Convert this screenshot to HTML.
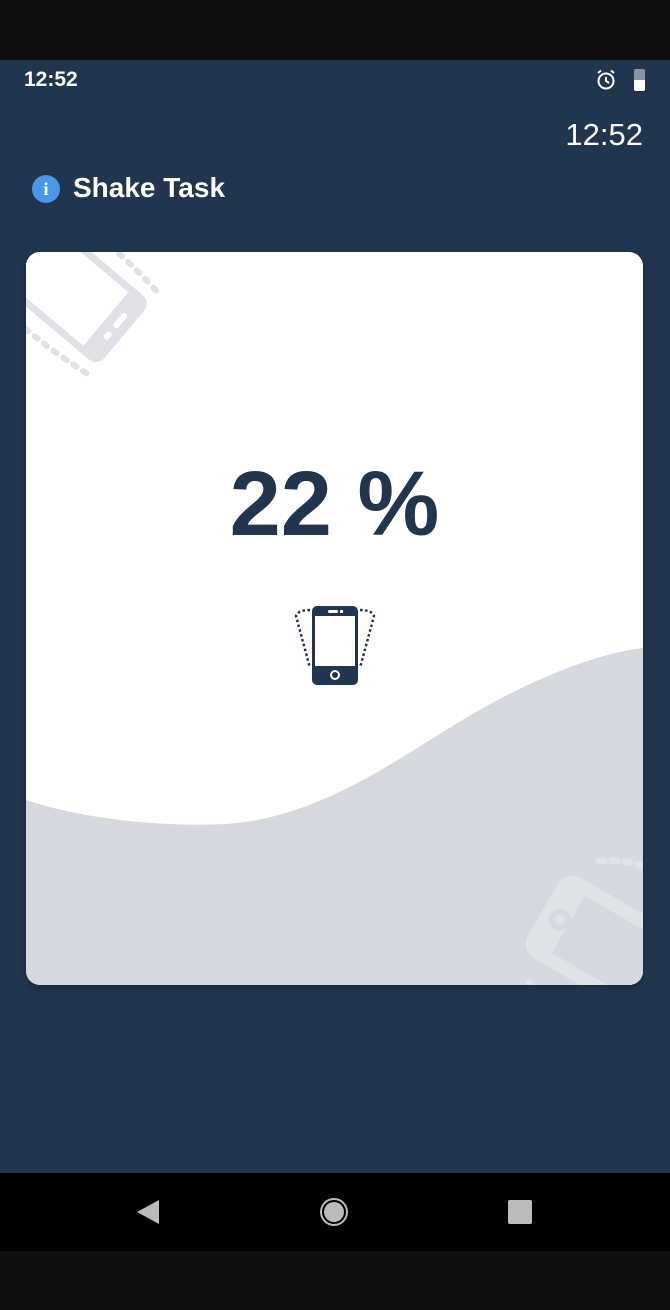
<!DOCTYPE html>
<html><head><style>
body{margin:0;width:670px;height:1310px;background:#22354f;font-family:"Liberation Sans",sans-serif;position:relative;overflow:hidden}
.top{position:absolute;left:0;top:0;width:670px;height:60px;background:#0f0f0f}
.nav{position:absolute;left:0;top:1173px;width:670px;height:78px;background:#000}
.bot{position:absolute;left:0;top:1251px;width:670px;height:59px;background:#0f0f0f}
.t{position:absolute;color:#fff}
.card{position:absolute;left:26px;top:252px;width:617px;height:733px;background:#fff;border-radius:14px;overflow:hidden;box-shadow:0 2px 6px rgba(0,0,0,.3)}
</style></head><body>
<div class="top"></div>
<div class="t" style="left:24px;top:68px;font-size:21px;font-weight:bold">12:52</div>
<svg style="position:absolute;left:594px;top:68px" width="24" height="24" viewBox="0 0 24 24"><circle cx="12" cy="13" r="7.5" fill="none" stroke="#fff" stroke-width="2"/><path d="M12 9v4l3 2M4 5l3-2.5M20 5l-3-2.5" stroke="#fff" stroke-width="2" fill="none"/></svg>
<div style="position:absolute;left:634px;top:69px;width:11px;height:22px;background:#8a93a0;border-radius:2px"></div>
<div style="position:absolute;left:634px;top:80px;width:11px;height:11px;background:#fff;border-radius:0 0 2px 2px"></div>
<div class="t" style="right:27px;top:117px;font-size:31px;">12:52</div>
<div style="position:absolute;left:32px;top:175px;width:28px;height:28px;border-radius:50%;background:#4a97e8;color:#fff;font-weight:bold;font-size:18px;text-align:center;line-height:28px;font-family:'Liberation Serif',serif">i</div>
<div class="t" style="left:73px;top:172px;font-size:28px;font-weight:bold">Shake Task</div>
<div class="card">
<svg width="617" height="733" style="position:absolute;left:0;top:0">
<path d="M0,548 C60,568 140,575 200,572 C300,565 380,500 450,460 C520,420 580,400 617,396 V733 H0Z" fill="#d5d8de"/>
<g transform="translate(37,31) rotate(-50)">
<rect x="-42" y="-80" width="84" height="160" rx="11" fill="#dfe1e6"/>
<rect x="-35" y="-70" width="70" height="126" fill="#fff"/>
<path d="M-13,68 h3 M2,68 h12" stroke="#fff" stroke-width="6" stroke-linecap="round"/>
<path d="M54,76 Q62,20 58,-60 M-54,76 Q-62,20 -58,-60" fill="none" stroke="#dfe1e6" stroke-width="6" stroke-dasharray="4 8" stroke-linecap="round"/>
</g>
<g transform="translate(590,700) rotate(-60)" fill="none" stroke="#e0e3e8">
<rect x="-42" y="-80" width="84" height="160" rx="12" stroke-width="9" fill="#dfe2e7"/>
<rect x="-33" y="-55" width="66" height="105" fill="#d5d8de" stroke="none"/>
<circle cx="0" cy="-65" r="8" stroke="#d5d8de" stroke-width="6" fill="none"/>
<path d="M-70,-60 A100,100 0 0 0 -70,60 M70,-60 A100,100 0 0 1 70,60" stroke-width="7" stroke-dasharray="5 8" stroke-linecap="round"/>
</g>
</svg>
<div style="position:absolute;left:0;width:617px;top:200px;text-align:center;font-size:92px;font-weight:bold;color:#22354f">22 %</div>
<svg style="position:absolute;left:264px;top:350px" width="90" height="90" viewBox="0 0 90 90">
<path d="M20,8 Q8,8 6,14 L20,66 M70,8 Q82,8 84,14 L70,66" fill="none" stroke="#22354f" stroke-width="2.5" stroke-dasharray="2.5 2.5"/>
<rect x="22" y="4" width="46" height="79" rx="5" fill="#22354f"/>
<rect x="25" y="14" width="40" height="50" fill="#fff"/>
<rect x="38" y="8" width="10" height="3" rx="1.5" fill="#fff"/><rect x="50" y="8" width="3" height="3" fill="#fff"/>
<circle cx="45" cy="73" r="4" fill="none" stroke="#fff" stroke-width="2"/>
</svg>
</div>
<div class="nav"></div>
<svg style="position:absolute;left:134px;top:1198px" width="28" height="28"><path d="M25,2 L3,14 L25,26Z" fill="#bbb"/></svg>
<div style="position:absolute;left:320px;top:1198px;width:28px;height:28px;border-radius:50%;border:2px solid #bbb;box-sizing:border-box;"><div style="margin:2px;width:20px;height:20px;border-radius:50%;background:#bbb"></div></div>
<div style="position:absolute;left:508px;top:1200px;width:24px;height:24px;background:#bbb;border-radius:2px"></div>
<div class="bot"></div>
</body></html>
